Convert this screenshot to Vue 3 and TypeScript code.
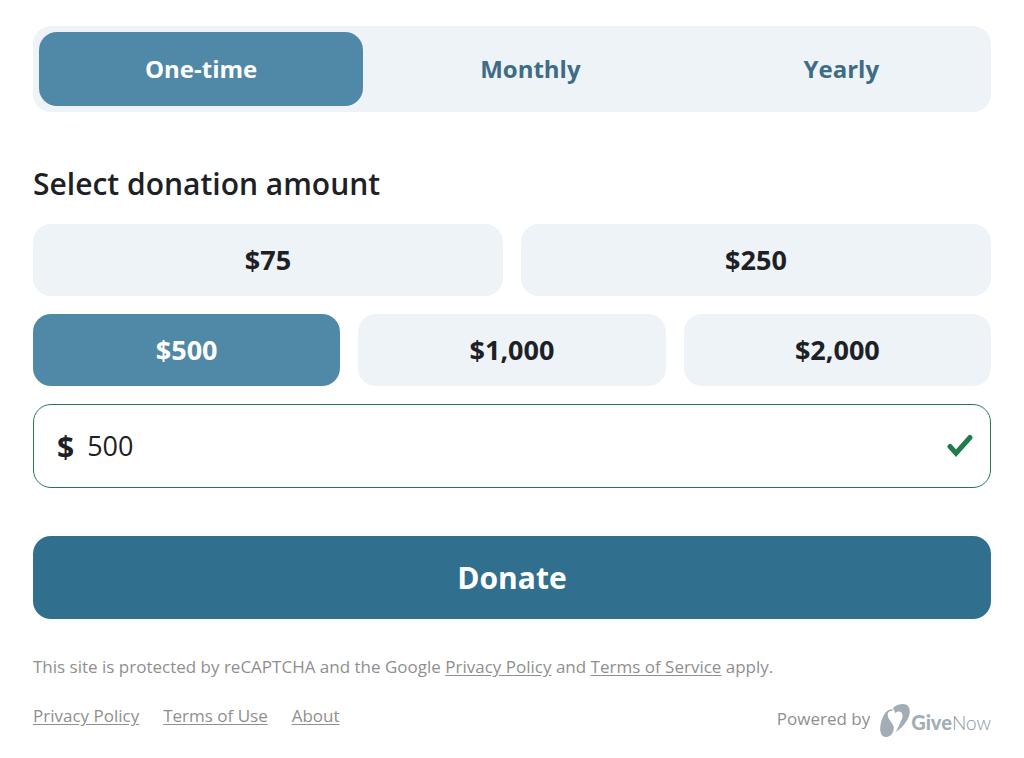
<script setup lang="ts">
import { ref } from 'vue'

const frequencies = ['One-time', 'Monthly', 'Yearly']
const frequency = ref('One-time')

const rows: number[][] = [
  [75, 250],
  [500, 1000, 2000],
]
const amount = ref('500')

const format = (value: number): string => '$' + value.toLocaleString('en-US')
</script>

<template>
  <main class="page">
    <form @submit.prevent>
      <div class="tabs" role="group" aria-label="Donation frequency">
        <button
          v-for="item in frequencies"
          :key="item"
          type="button"
          class="tab"
          :class="{ selected: frequency === item }"
          :aria-pressed="frequency === item"
          @click="frequency = item"
        >{{ item }}</button>
      </div>

      <h1 class="heading"><label for="amount">Select donation amount</label></h1>

      <div class="amounts">
        <div v-for="(row, index) in rows" :key="index" class="row">
          <button
            v-for="value in row"
            :key="value"
            type="button"
            class="amount"
            :class="{ selected: amount === String(value) }"
            :aria-pressed="amount === String(value)"
            @click="amount = String(value)"
          >{{ format(value) }}</button>
        </div>
        <div class="field">
          <span class="currency">$</span>
          <input id="amount" v-model="amount" type="text" inputmode="decimal" />
          <svg class="check" viewBox="0 0 26 24" aria-hidden="true">
            <path d="M3 12.500 9 19.200 23 3.500" />
          </svg>
        </div>
      </div>

      <button type="submit" class="donate">Donate</button>
    </form>

    <p class="notice">
      This site is protected by reCAPTCHA and the Google
      <a href="#privacy">Privacy Policy</a> and
      <a href="#service">Terms of Service</a> apply.
    </p>

    <footer class="footer">
      <nav class="links">
        <a href="#privacy-policy">Privacy Policy</a>
        <a href="#terms">Terms of Use</a>
        <a href="#about">About</a>
      </nav>
      <div class="powered">
        <span>Powered by</span>
        <a href="#givenow" class="brand" aria-label="GiveNow">
          <svg class="mark" viewBox="0 0 30 34" aria-hidden="true">
            <path d="M12.300 5.300C8.500 5 5.500 8 3.500 11.800C.8 17-.3 23 .4 27.500C1.100 31.500 3.500 33.300 6.500 33C11 32.500 14 28 13.800 23.500C13.400 19 8 16 7.700 11C7.600 7.800 9.800 6.300 12.800 7.200Z" />
            <path d="M12.800 4.200C15.500 1.300 19.500 0 23 0C27.500 0 30 3.500 29.800 8C29.300 15.500 22.500 24 15.600 28C17 25 18.500 23 19.500 20.500C20.800 17 22.800 14.500 22.500 11C22.200 7.300 17.700 6.300 15 9.200C14.700 7.300 14 5.500 12.800 4.200Z" />
          </svg>
          <span class="word"><b>Give</b>Now</span>
        </a>
      </div>
    </footer>
  </main>
</template>

<style>
body {
  margin: 0;
  background: #fff;
}
</style>

<style scoped>
.page {
  padding: 26px 33px 20px;
  font-family: "Open Sans", "Noto Sans", sans-serif;
  color: #1d2125;
}

button {
  border: 0;
  border-radius: 18px;
  padding: 0 0 2px;
  font-family: inherit;
  cursor: pointer;
}

.tabs {
  display: flex;
  gap: 11px;
  padding: 6px;
  border-radius: 18px;
  background: #eef3f8;
}

.tab {
  flex: 1 1 auto;
  height: 74px;
  background: transparent;
  color: #3e6c86;
  font-size: 24px;
  font-weight: 700;
}

.heading {
  margin: 50px 0 18px;
  font-size: 30px;
  font-weight: 600;
  line-height: 44px;
}

.amounts {
  display: flex;
  flex-direction: column;
  gap: 18px;
}

.row {
  display: flex;
  gap: 18px;
}

.amount {
  flex: 1 1 0;
  height: 72px;
  background: #eef3f8;
  color: #1d2125;
  font-size: 27px;
  font-weight: 700;
}

.tab.selected,
.amount.selected {
  background: #5089a7;
  color: #fff;
}

.field {
  display: flex;
  align-items: center;
  height: 84px;
  box-sizing: border-box;
  padding: 0 17px 0 23px;
  border: 1px solid #217c4c;
  border-radius: 18px;
}

.currency {
  font-size: 30px;
  font-weight: 700;
}

.field input {
  flex: 1;
  min-width: 0;
  padding: 0 0 2px 13px;
  border: 0;
  outline: 0;
  background: transparent;
  color: inherit;
  font-family: inherit;
  font-size: 27px;
}

.check {
  width: 26px;
  height: 24px;
  fill: none;
  stroke: #217c4c;
  stroke-width: 5;
  stroke-linecap: round;
  stroke-linejoin: miter;
}

.donate {
  width: 100%;
  height: 83px;
  margin-top: 48px;
  padding: 0;
  background: #316f8f;
  color: #fff;
  font-size: 30px;
  font-weight: 700;
}

.notice {
  margin: 36px 0 0;
  color: #8f8f8f;
  font-size: 17px;
  line-height: 24px;
}

a {
  color: inherit;
  text-underline-offset: 2px;
}

.footer {
  display: flex;
  justify-content: space-between;
  align-items: flex-start;
  margin-top: 25px;
  color: #8f8f8f;
  font-size: 17px;
  line-height: 24px;
}

.links {
  display: flex;
  gap: 24px;
}

.powered {
  display: flex;
  align-items: center;
  gap: 10px;
}

.powered > span {
  padding-bottom: 4px;
}

.brand {
  display: flex;
  align-items: center;
  gap: 1px;
  color: #a3adb5;
  text-decoration: none;
}

.mark {
  width: 30px;
  height: 34px;
  fill: #a3adb5;
}

.word {
  padding-top: 2px;
  font-family: Lato, "Open Sans", sans-serif;
  font-size: 19px;
  font-weight: 300;
  color: #87929b;
}

.word b {
  font-size: 20px;
  font-weight: 900;
  color: #a3adb5;
}
</style>
